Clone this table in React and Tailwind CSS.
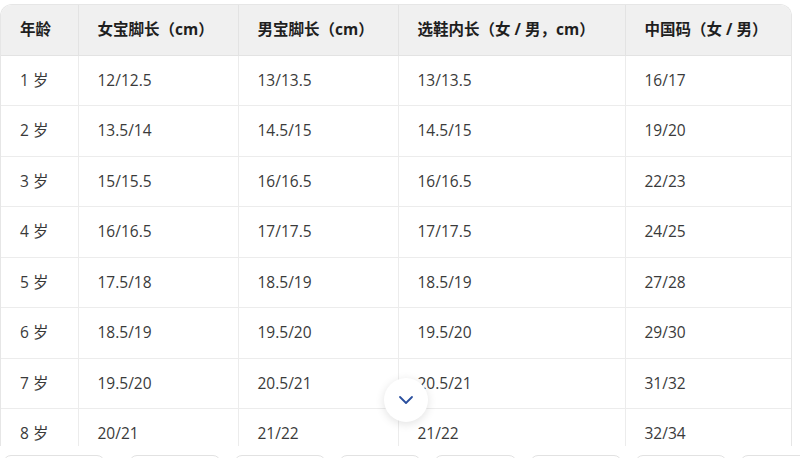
import React from 'react';

const headers = ['年龄', '女宝脚长（cm）', '男宝脚长（cm）', '选鞋内长（女 / 男，cm）', '中国码（女 / 男）'];

const rows = [
    ['1 岁', '12/12.5', '13/13.5', '13/13.5', '16/17'],
    ['2 岁', '13.5/14', '14.5/15', '14.5/15', '19/20'],
    ['3 岁', '15/15.5', '16/16.5', '16/16.5', '22/23'],
    ['4 岁', '16/16.5', '17/17.5', '17/17.5', '24/25'],
    ['5 岁', '17.5/18', '18.5/19', '18.5/19', '27/28'],
    ['6 岁', '18.5/19', '19.5/20', '19.5/20', '29/30'],
    ['7 岁', '19.5/20', '20.5/21', '20.5/21', '31/32'],
    ['8 岁', '20/21', '21/22', '21/22', '32/34'],
];

const colWidths = ['w-[77px]', 'w-[160px]', 'w-[160px]', 'w-[227px]', 'w-[168px]'];

const App = () => {
    return (
        <div className="w-[800px] h-[458px] bg-white overflow-hidden font-['Open_Sans','Noto_Sans_CJK_SC',sans-serif] relative">
            {/* Table */}
            <div className="mt-[4px] w-[792px] h-[442px] overflow-hidden rounded-t-[12px] border border-b-0 border-[#e6e6e6]">
                <table className="w-full border-collapse table-fixed">
                    <thead className="bg-[#f0f0f0]">
                        <tr className="h-[50px] border-b border-[#e3e3e3]">
                            {headers.map((h, i) => (
                                <th
                                    key={h}
                                    className={`${colWidths[i]} px-[19px] text-left text-[15.5px] font-bold text-[#1f1f1f] ${i > 0 ? 'border-l border-[#e3e3e3]' : ''}`}
                                >
                                    {h}
                                </th>
                            ))}
                        </tr>
                    </thead>
                    <tbody>
                        {rows.map(r => (
                            <tr key={r[0]} className="h-[50.5px] border-b border-[#ececec]">
                                {r.map((c, i) => (
                                    <td
                                        key={i}
                                        className={`px-[19px] text-[15.5px] text-[#3a3a3a] ${i > 0 ? 'border-l border-[#ececec]' : ''}`}
                                    >
                                        {c}
                                    </td>
                                ))}
                            </tr>
                        ))}
                    </tbody>
                </table>
            </div>

            {/* Chips row */}
            <div className="flex items-start pl-[3px] mt-[9px]">
                <div className="w-[102px] h-[30px] shrink-0 rounded-[8px] border border-[#e2e2e2] mr-[24px]" />
                <div className="flex gap-[13px]">
                    <div className="w-[92px] h-[30px] shrink-0 rounded-[8px] border border-[#e2e2e2]" />
                    <div className="w-[92px] h-[30px] shrink-0 rounded-[8px] border border-[#e2e2e2]" />
                    <div className="w-[82px] h-[30px] shrink-0 rounded-[8px] border border-[#e2e2e2]" />
                    <div className="w-[83px] h-[30px] shrink-0 rounded-[8px] border border-[#e2e2e2]" />
                    <div className="w-[92px] h-[30px] shrink-0 rounded-[8px] border border-[#e2e2e2]" />
                    <div className="w-[92px] h-[30px] shrink-0 rounded-[8px] border border-[#e2e2e2]" />
                    <div className="w-[80px] h-[30px] shrink-0 rounded-[8px] border border-[#e2e2e2]" />
                </div>
            </div>

            {/* Expand button */}
            <div className="absolute left-[384px] top-[378px] w-[44px] h-[44px] rounded-full bg-white shadow-[0_2px_10px_rgba(0,0,0,0.12)] flex items-center justify-center">
                <svg width="16" height="10" viewBox="0 0 16 10" fill="none">
                    <path d="M2 2l6 6 6-6" stroke="#2a4f9e" strokeWidth="1.8" strokeLinecap="round" strokeLinejoin="round" />
                </svg>
            </div>
        </div>
    );
};

export default App;
